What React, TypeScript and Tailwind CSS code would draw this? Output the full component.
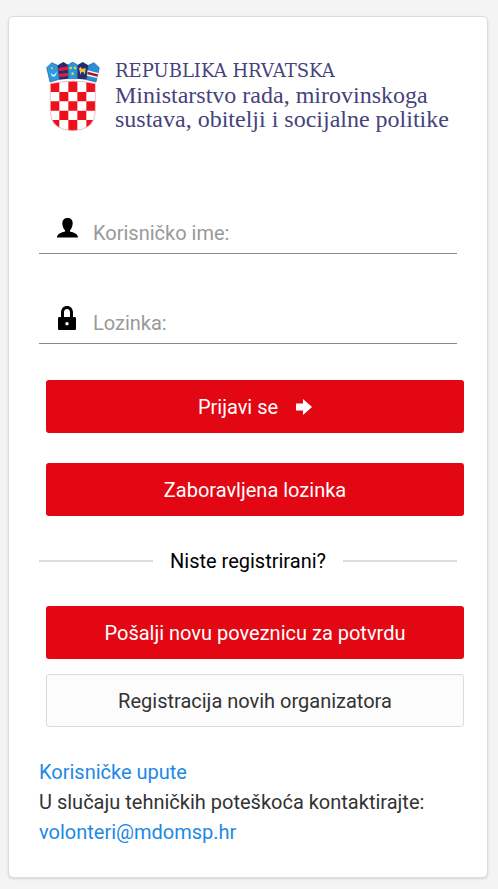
import { ComponentProps, FormEvent, ReactNode, useState } from "react";

const CoatOfArms = () => (
  <svg viewBox="0 0 162 210" className="mt-[3px] w-[54px] h-[70px] shrink-0" aria-hidden="true">
    <defs>
      <clipPath id="shield">
        <path d="M13 65 Q82 50 148 65 V148 Q146 204 80 206 Q14 204 13 148 Z" />
      </clipPath>
    </defs>
    <g clipPath="url(#shield)">
      <rect width="162" height="210" fill="#fff" />
      <path
        fill="#f0101c"
        d="M12 50h28v40h-28z M67 50h27v40h-27z M121 50h28v40h-28z
           M40 90h27v28h-27z M94 90h27v28h-27z
           M12 118h28v28h-28z M67 118h27v28h-27z M121 118h28v28h-28z
           M40 146h27v28h-27z M94 146h27v28h-27z
           M12 174h28v34h-28z M67 174h27v34h-27z M121 174h28v34h-28z"
      />
    </g>
    <path
      d="M13 65 Q82 50 148 65 V148 Q146 204 80 206 Q14 204 13 148 Z"
      fill="none"
      stroke="#e8a0a6"
      strokeWidth="2"
    />
    <path d="M2 17 L17 2 L35 10 L40 52 L12 60 Z" fill="#2a9be0" stroke="#245a92" strokeWidth="2" />
    <path d="M14 32 Q25 46 32 28 Q31 44 23 44 Q16 43 14 32Z" fill="#d9f2ff" />
    <circle cx="18" cy="19" r="3" fill="#e6d34c" />
    <path d="M35 10 L52 0 L67 9 L68 50 L40 53 Z" fill="#252a72" />
    <path d="M37 18 L67 13 V23 L38 28Z M39 36 L67 32 V42 L40 46Z" fill="#dd2038" />
    <path d="M66 9 L80 0 L95 9 L94 50 H68 Z" fill="#2698dc" stroke="#24649a" strokeWidth="2" />
    <g fill="#e6d24b">
      <circle cx="74" cy="18" r="4" />
      <circle cx="87" cy="18" r="4" />
      <circle cx="80" cy="35" r="4" />
    </g>
    <path d="M95 9 L110 0 L127 10 L122 53 L94 50 Z" fill="#252a72" />
    <path d="M99 19 L105 15 L108 21 L119 18 L117 38 L112 30 L106 31 L104 39 L101 28Z" fill="#eac640" />
    <path d="M127 10 L144 2 L160 17 L150 60 L122 53 Z" fill="#2990d5" stroke="#245a92" strokeWidth="2" />
    <path d="M125 25 L157 33 L153 48 L123 41Z" fill="#fff" />
    <path d="M125 29 L156 37 L154 44 L124 37Z" fill="#a5192d" />
  </svg>
);

const UserIcon = () => (
  <svg viewBox="0 0 21 20" className="w-[21px] h-5" fill="currentColor" aria-hidden="true">
    <path d="M10.5 0C7.200 0 5.300 2 5.300 5c0 3.200 1.200 6 2.700 7.200v1.300C4 14.500 0 16 0 19.500h21c0-3.500-4-5-8-6v-1.300c1.500-1.200 2.700-4 2.700-7.200 0-3-1.900-5-5.200-5z" />
  </svg>
);

const LockIcon = () => (
  <svg viewBox="0 0 20 24" className="w-5 h-6" fill="currentColor" aria-hidden="true">
    <path
      fillRule="evenodd"
      d="M4 11V6.500C4 2.700 6.500 0 10 0s6 2.700 6 6.500V11h1.500c1 0 1.500.5 1.500 1.500v10c0 1-.5 1.500-1.500 1.500h-15C1.500 24 1 23.500 1 22.500v-10C1 11.500 1.500 11 2.500 11H4zm3 0h6V6.500C13 4.500 12 3 10 3S7 4.500 7 6.500V11zm3 5a1.700 1.700 0 1 0 0 3.400 1.700 1.700 0 0 0 0-3.400z"
    />
  </svg>
);

const ArrowIcon = () => (
  <svg viewBox="0 0 16 16" className="w-4 h-4" fill="currentColor" aria-hidden="true">
    <path d="M0 4.500h7V0l9 8-9 8v-4.500H0z" />
  </svg>
);

type FieldProps = ComponentProps<"input"> & { icon: ReactNode };

const Field = ({ icon, ...props }: FieldProps) => (
  <label className="flex h-10 border-b border-[#888]">
    <span className="flex w-[54px] h-7 items-center pl-[18px]">{icon}</span>
    <input
      className="flex-1 min-w-0 bg-transparent pb-0.5 outline-none placeholder:text-[#999]"
      aria-label={props.placeholder}
      {...props}
    />
  </label>
);

const RedButton = (props: ComponentProps<"button">) => (
  <button
    className="flex w-full h-[53px] items-center justify-center gap-[18px] rounded-[3px] bg-[#e30613] text-white hover:bg-[#c10510]"
    {...props}
  />
);

const App = () => {
  const [username, setUsername] = useState("");
  const [password, setPassword] = useState("");

  function handleLogin(event: FormEvent) {
    event.preventDefault();
  }

  return (
    <div className="min-h-screen bg-[#f4f4f4] pt-4 pr-2.5 pb-[11px] pl-2 font-[Roboto,sans-serif] text-xl leading-[30px] text-[#333]">
      <main className="rounded-[5px] border border-[#dcdcdc] bg-white px-[30px] pt-[42px] pb-[30px] shadow-sm">
        <header className="flex gap-[15px] pl-[7px] text-[#46437c]">
          <CoatOfArms />
          <h1 className="font-['Liberation_Serif',serif] text-2xl leading-6 whitespace-nowrap">
            <span className="block font-['DejaVu_Serif',serif] text-lg leading-6">
              REPUBLIKA HRVATSKA
            </span>
            Ministarstvo rada, mirovinskoga
            <br />
            sustava, obitelji i socijalne politike
          </h1>
        </header>

        <form className="mt-[82px]" onSubmit={handleLogin}>
          <div className="flex flex-col gap-[50px] text-black">
            <Field
              icon={<UserIcon />}
              type="text"
              placeholder="Korisničko ime:"
              value={username}
              onChange={(event) => setUsername(event.target.value)}
            />
            <Field
              icon={<LockIcon />}
              type="password"
              placeholder="Lozinka:"
              value={password}
              onChange={(event) => setPassword(event.target.value)}
            />
          </div>
          <div className="mt-9 -mr-[7px] ml-[7px] flex flex-col gap-[30px]">
            <RedButton type="submit">
              Prijavi se
              <ArrowIcon />
            </RedButton>
            <RedButton type="button">Zaboravljena lozinka</RedButton>
          </div>
        </form>

        <div className="my-[30px] flex items-center gap-[17px] text-black">
          <div className="h-0.5 flex-1 bg-[#dcdcdc]" />
          <p>Niste registrirani?</p>
          <div className="h-0.5 flex-1 bg-[#dcdcdc]" />
        </div>

        <div className="-mr-[7px] ml-[7px] flex flex-col gap-[15px]">
          <RedButton type="button">Pošalji novu poveznicu za potvrdu</RedButton>
          <button
            type="button"
            className="h-[53px] rounded-[3px] border border-[#dcdcdc] bg-[#fcfcfc] hover:bg-gray-100"
          >
            Registracija novih organizatora
          </button>
        </div>

        <footer className="mt-[30px]">
          <a href="#upute" className="text-[#1e88e5]">
            Korisničke upute
          </a>
          <p>U slučaju tehničkih poteškoća kontaktirajte:</p>
          <a href="mailto:volonteri@mdomsp.hr" className="text-[#1e88e5]">
            volonteri@mdomsp.hr
          </a>
        </footer>
      </main>
    </div>
  );
};

export default App;
